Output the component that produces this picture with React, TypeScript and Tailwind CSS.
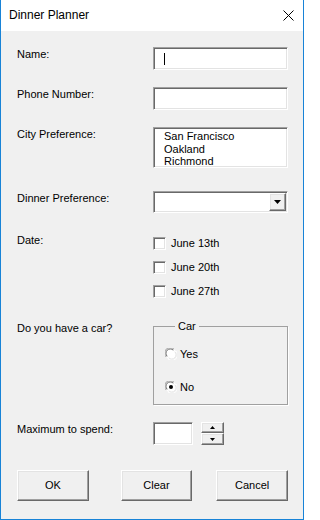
import React from 'react';

const sunken =
  'bg-white border border-t-[#a0a0a0] border-l-[#a0a0a0] border-b-white border-r-white shadow-[inset_1px_1px_0_#696969,inset_-1px_-1px_0_#e3e3e3]';
const raised =
  'bg-[#f0f0f0] border border-t-white border-l-white border-b-[#696969] border-r-[#696969] shadow-[inset_-1px_-1px_0_#a0a0a0,inset_1px_1px_0_#e3e3e3]';

function Label({ children }: { children: React.ReactNode }) {
  return <div className="w-[136px] shrink-0 pt-[1px] leading-[13px]">{children}</div>;
}

function Checkbox({ label }: { label: string }) {
  return (
    <div className="flex items-center h-[13px]">
      <span className={`w-[13px] h-[13px] ${sunken}`} />
      <span className="ml-[5px] leading-[13px]">{label}</span>
    </div>
  );
}

function Radio({ label, checked }: { label: string; checked?: boolean }) {
  return (
    <div className="flex items-center h-[12px]">
      <svg width="12" height="12" viewBox="0 0 12 12">
        <circle cx="6" cy="6" r="5.5" fill="white" />
        <path d="M1.2 9 A5.2 5.2 0 0 1 9 1.2" fill="none" stroke="#a0a0a0" strokeWidth="1" />
        <path d="M2.2 8.3 A4.2 4.2 0 0 1 8.3 2.2" fill="none" stroke="#696969" strokeWidth="1" />
        <path d="M10.8 3 A5.2 5.2 0 0 1 3 10.8" fill="none" stroke="#ffffff" strokeWidth="1" />
        <path d="M9.8 3.7 A4.2 4.2 0 0 1 3.7 9.8" fill="none" stroke="#e3e3e3" strokeWidth="1" />
        {checked && <circle cx="6" cy="6" r="2" fill="black" />}
      </svg>
      <span className="ml-[3px] leading-[13px]">{label}</span>
    </div>
  );
}

export default function App() {
  return (
    <div
      className="w-[304px] h-[520px] flex flex-col border-x border-b border-[#1883d7] bg-[#f0f0f0] text-[11px] text-black"
      style={{ fontFamily: '"Liberation Sans", Arial, sans-serif' }}
    >
      <div className="h-[31px] shrink-0 bg-white flex items-center justify-between pl-[8px] pr-[9px]">
        <span className="text-[12px] pb-[1px]">Dinner Planner</span>
        <svg width="11" height="11" viewBox="0 0 11 11" className="mb-[1px]">
          <path d="M0.5 0.5 L10.5 10.5 M10.5 0.5 L0.5 10.5" stroke="#000" strokeWidth="1" />
        </svg>
      </div>

      <div className="flex-1 flex flex-col pl-[16px] pr-[15px]">
        <div className="flex mt-[16px]">
          <Label>Name:</Label>
          <div className={`w-[135px] h-[23px] ${sunken} flex items-center pl-[10px]`}>
            <span className="w-[1px] h-[12px] bg-black" />
          </div>
        </div>

        <div className="flex mt-[17px]">
          <Label>Phone Number:</Label>
          <div className={`w-[135px] h-[23px] ${sunken}`} />
        </div>

        <div className="flex mt-[17px]">
          <Label>City Preference:</Label>
          <div className={`w-[135px] h-[41px] ${sunken} pl-[10px] pt-[2px] leading-[12.5px] overflow-hidden`}>
            <div>San Francisco</div>
            <div>Oakland</div>
            <div>Richmond</div>
          </div>
        </div>

        <div className="flex mt-[23px]">
          <Label>Dinner Preference:</Label>
          <div className={`w-[135px] h-[22px] ${sunken} flex justify-end items-stretch p-[1px]`}>
            <div className={`w-[17px] ${raised} flex items-center justify-center`}>
              <svg width="7" height="4" viewBox="0 0 7 4">
                <path d="M0 0 H7 L3.5 4 Z" fill="#000" />
              </svg>
            </div>
          </div>
        </div>

        <div className="flex mt-[20px]">
          <Label>Date:</Label>
          <div className="flex flex-col gap-[11px] pt-[4px]">
            <Checkbox label="June 13th" />
            <Checkbox label="June 20th" />
            <Checkbox label="June 27th" />
          </div>
        </div>

        <div className="flex mt-[23px]">
          <Label>Do you have a car?</Label>
          <fieldset className="w-[135px] h-[85px] border border-[#a0a0a0] shadow-[1px_1px_0_white] pl-[11px] mt-[-1px]">
            <legend className="ml-[10px] px-[3px] leading-[13px]">Car</legend>
            <div className="flex flex-col gap-[21px] pt-[15px]">
              <Radio label="Yes" />
              <Radio label="No" checked />
            </div>
          </fieldset>
        </div>

        <div className="flex mt-[17px]">
          <Label>Maximum to spend:</Label>
          <div className={`w-[40px] h-[23px] ${sunken}`} />
          <div className="ml-[8px] flex flex-col w-[23px] h-[23px]">
            <div className={`h-[11px] ${raised} flex items-center justify-center`}>
              <svg width="5" height="3" viewBox="0 0 5 3">
                <path d="M0 3 H5 L2.5 0 Z" fill="#000" />
              </svg>
            </div>
            <div className={`h-[12px] ${raised} flex items-center justify-center`}>
              <svg width="5" height="3" viewBox="0 0 5 3">
                <path d="M0 0 H5 L2.5 3 Z" fill="#000" />
              </svg>
            </div>
          </div>
        </div>

        <div className="flex mt-[25px]">
          <button className={`w-[72px] h-[31px] ${raised}`}>OK</button>
          <button className={`w-[72px] h-[31px] ml-[32px] ${raised}`}>Clear</button>
          <button className={`w-[72px] h-[31px] ml-[24px] ${raised}`}>Cancel</button>
        </div>
      </div>
    </div>
  );
}
